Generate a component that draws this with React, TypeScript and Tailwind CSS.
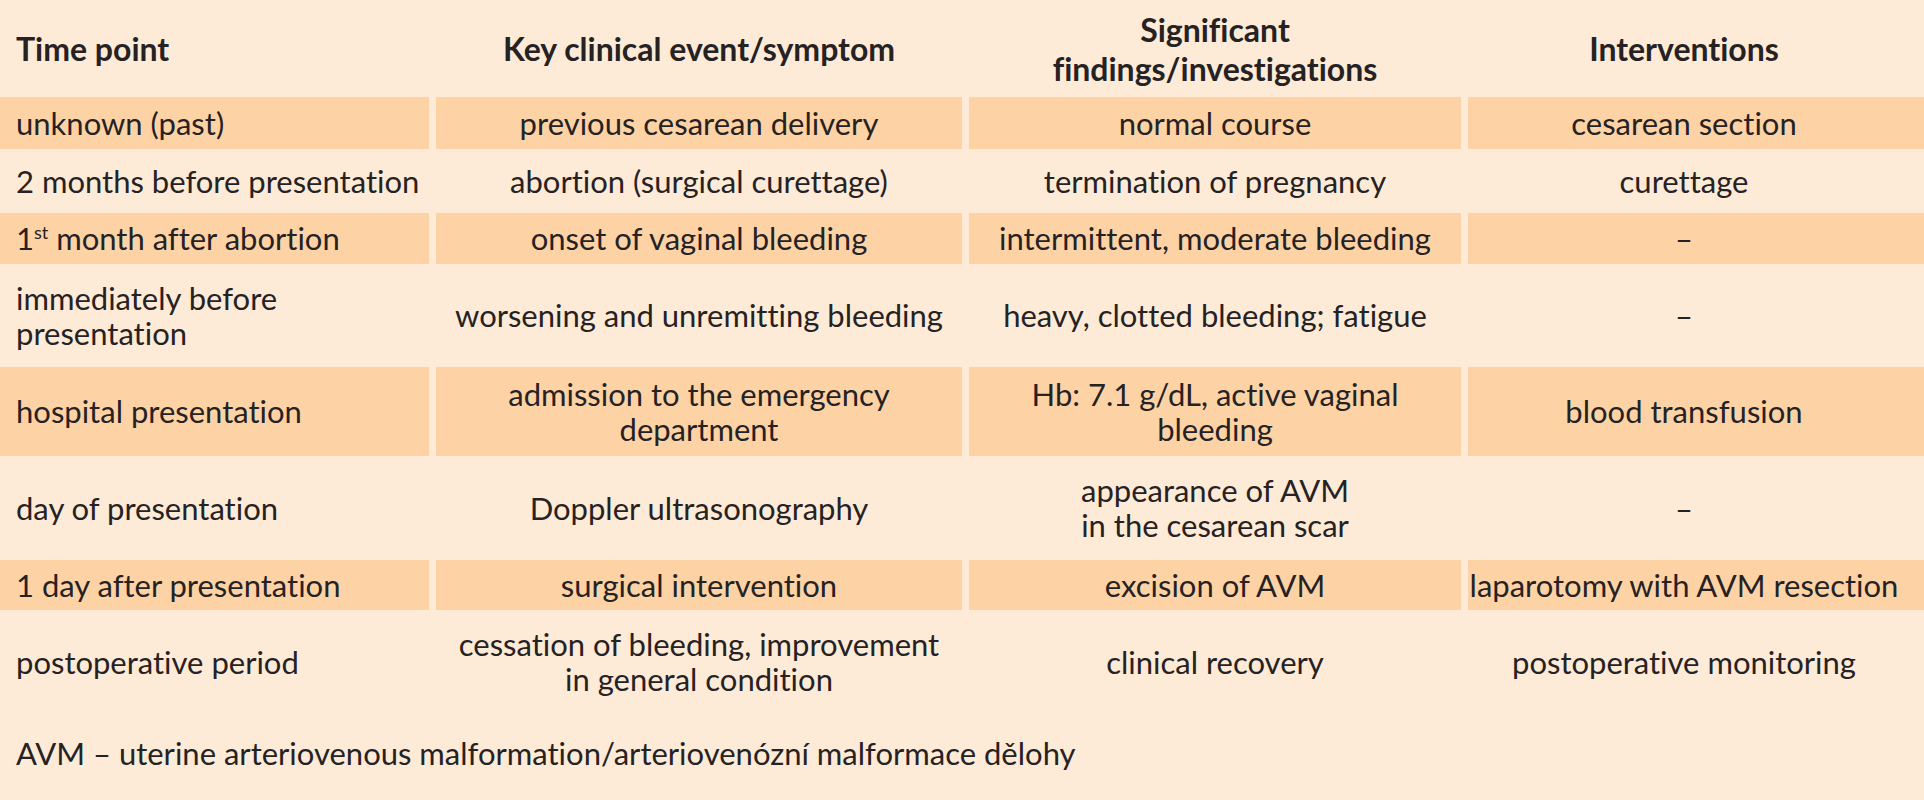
import { ReactNode } from "react";

type Row = {
  time: ReactNode;
  event: ReactNode;
  findings: ReactNode;
  interventions: ReactNode;
  shaded: boolean;
};

const rows: Row[] = [
  {
    time: "unknown (past)",
    event: "previous cesarean delivery",
    findings: "normal course",
    interventions: "cesarean section",
    shaded: true,
  },
  {
    time: "2 months before presentation",
    event: "abortion (surgical curettage)",
    findings: "termination of pregnancy",
    interventions: "curettage",
    shaded: false,
  },
  {
    time: (
      <>
        1<sup className="text-[18px] relative top-[-11px]">st</sup> month after abortion
      </>
    ),
    event: "onset of vaginal bleeding",
    findings: "intermittent, moderate bleeding",
    interventions: "–",
    shaded: true,
  },
  {
    time: (
      <>
        immediately before
        <br />
        presentation
      </>
    ),
    event: "worsening and unremitting bleeding",
    findings: "heavy, clotted bleeding; fatigue",
    interventions: "–",
    shaded: false,
  },
  {
    time: "hospital presentation",
    event: (
      <>
        admission to the emergency
        <br />
        department
      </>
    ),
    findings: (
      <>
        Hb: 7.1 g/dL, active vaginal
        <br />
        bleeding
      </>
    ),
    interventions: "blood transfusion",
    shaded: true,
  },
  {
    time: "day of presentation",
    event: "Doppler ultrasonography",
    findings: (
      <>
        appearance of AVM
        <br />
        in the cesarean scar
      </>
    ),
    interventions: "–",
    shaded: false,
  },
  {
    time: "1 day after presentation",
    event: "surgical intervention",
    findings: "excision of AVM",
    interventions: "laparotomy with AVM resection",
    shaded: true,
  },
  {
    time: "postoperative period",
    event: (
      <>
        cessation of bleeding, improvement
        <br />
        in general condition
      </>
    ),
    findings: "clinical recovery",
    interventions: "postoperative monitoring",
    shaded: false,
  },
];

function Cell({ children, shaded, align }: { children: ReactNode; shaded: boolean; align: "left" | "center" | "last" }) {
  return (
    <div
      className={
        (shaded ? "bg-[#fdd3a6] " : "bg-[#fdebd7] ") +
        (align === "left"
          ? "justify-start text-left pl-[16px] "
          : align === "last"
          ? "justify-center text-center pr-[24px] "
          : "justify-center text-center ") +
        "flex items-center leading-[35px] whitespace-nowrap"
      }
    >
      <div>{children}</div>
    </div>
  );
}

export default function App() {
  return (
    <main
      className="min-h-screen w-full bg-[#fdebd7] text-[#262223] text-[31px] [font-variant-ligatures:none]"
      style={{ fontFamily: "Lato, 'Open Sans', sans-serif" }}
    >
      <div className="grid grid-cols-[429px_526px_492px_1fr] grid-rows-[91px_52px_52px_51px_91px_89px_92px_50px_92px] gap-x-[7px] gap-y-[6px]">
        {/* header */}
        <div className="flex items-center pl-[16px] pt-[6px] font-bold text-[32px]">Time point</div>
        <div className="flex items-center justify-center pt-[6px] font-bold text-[32px]">Key clinical event/symptom</div>
        <div className="flex items-center justify-center pt-[6px] text-center font-bold text-[32px] leading-[39px]">
          <div>
            Significant
            <br />
            findings/investigations
          </div>
        </div>
        <div className="flex items-center justify-center pt-[6px] pr-[24px] font-bold text-[32px]">Interventions</div>

        {rows.map((r, i) => (
          <div key={i} className="contents">
            <Cell shaded={r.shaded} align="left">
              {r.time}
            </Cell>
            <Cell shaded={r.shaded} align="center">
              {r.event}
            </Cell>
            <Cell shaded={r.shaded} align="center">
              {r.findings}
            </Cell>
            <Cell shaded={r.shaded} align="last">
              {r.interventions}
            </Cell>
          </div>
        ))}
      </div>

      <p className="pl-[16px] pt-[28px] leading-[35px]">
        AVM – uterine arteriovenous malformation/arteriovenózní malformace dělohy
      </p>
    </main>
  );
}
